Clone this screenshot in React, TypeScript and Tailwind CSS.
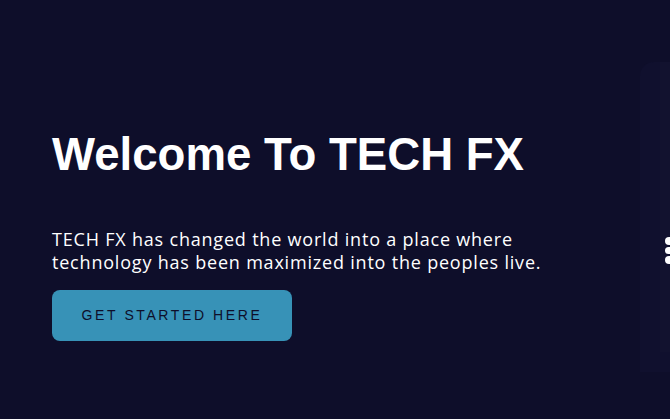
export default function App() {
  return (
    <div className="relative h-[419px] w-[670px] overflow-hidden bg-[#0e0e2a]">
      <section className="flex flex-col px-[52px] pt-[128px]">
        <h1 className="font-['Liberation_Sans',Arial,sans-serif] text-[45.6px] font-bold leading-[54px] text-white">
          Welcome To TECH FX
        </h1>
        <p className="mt-[46px] font-['Open_Sans',sans-serif] text-[18px] leading-[23px] tracking-[0.8px] text-white">
          TECH FX has changed the world into a place where
          <br />
          technology has been maximized into the peoples live.
        </p>
        <button
          type="button"
          className="mt-[16px] flex h-[51px] w-[240px] items-center justify-center rounded-lg bg-[#3792b7] font-['Liberation_Sans',Arial,sans-serif] text-[14px] tracking-[2.6px] text-[#0e0e2a]"
        >
          GET STARTED HERE
        </button>
      </section>

      {/* faint device on the right edge */}
      <div className="absolute right-0 top-[62px] h-[310px] w-[30px] rounded-tl-[14px] bg-[#10102e]" />
      <div className="absolute right-0 top-[62px] h-[290px] w-[10px] bg-[#12122f]" />
      <div className="absolute right-[-5px] top-[237px] flex flex-col gap-[2px]">
        <span className="h-[8px] w-[10px] rounded-full bg-white" />
        <span className="h-[7px] w-[8px] rounded-full bg-white" />
        <span className="h-[8px] w-[10px] rounded-full bg-white" />
      </div>
    </div>
  );
}
